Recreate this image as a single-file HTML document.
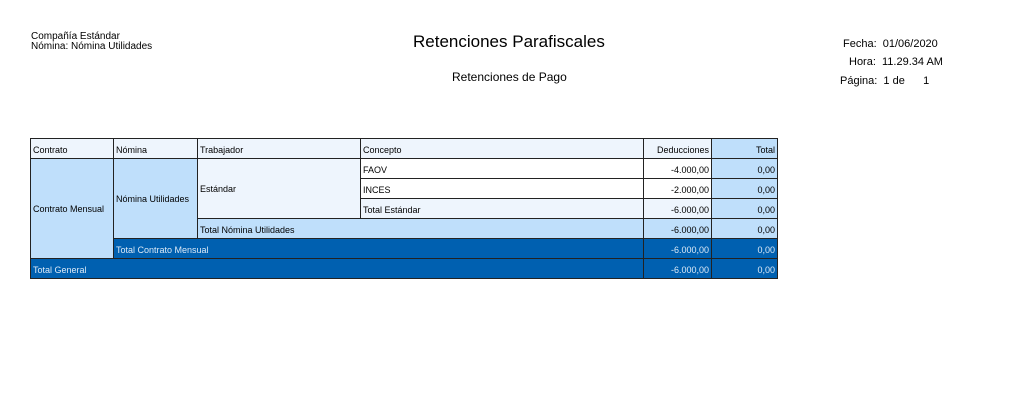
<!DOCTYPE html>
<html><head><meta charset="utf-8"><style>
body{margin:0;width:1011px;height:406px;background:#fff;font-family:"Liberation Sans",sans-serif;color:#000;position:relative;overflow:hidden}
.t{position:absolute;white-space:nowrap}
.c{position:absolute;box-sizing:border-box;border:1px solid #222;font-size:9px;line-height:18px;padding:2px 2px 0;white-space:nowrap;overflow:hidden}
.r{text-align:right}
.h{background:#eef5fd}
.l{background:#bfdffb}
.d{background:#0060b0;color:#dbe9f7}
.w{background:#fff}
</style></head><body>
<div class="t" style="left:31px;top:32px;font-size:10px;line-height:10px">Compañía Estándar<br>Nómina: Nómina Utilidades</div>
<div class="t" style="left:413px;top:32px;font-size:17px">Retenciones Parafiscales</div>
<div class="t" style="left:452px;top:70px;font-size:12px">Retenciones de Pago</div>
<div class="t" style="left:843px;top:38px;font-size:11px">Fecha:&nbsp; 01/06/2020</div>
<div class="t" style="left:849px;top:56px;font-size:11px">Hora:&nbsp; 11.29.34 AM</div>
<div class="t" style="left:840px;top:75px;font-size:11px">Página:&nbsp; 1 de &nbsp;&nbsp;&nbsp;&nbsp; 1</div>

<div class="c h" style="left:30px;top:138px;width:84px;height:21px">Contrato</div>
<div class="c h" style="left:113px;top:138px;width:85px;height:21px">Nómina</div>
<div class="c h" style="left:197px;top:138px;width:164px;height:21px">Trabajador</div>
<div class="c h" style="left:360px;top:138px;width:284px;height:21px">Concepto</div>
<div class="c h r" style="left:643px;top:138px;width:69px;height:21px">Deducciones</div>
<div class="c l r" style="left:711px;top:138px;width:67px;height:21px">Total</div>

<div class="c l" style="left:30px;top:158px;width:84px;height:101px;line-height:97px">Contrato Mensual</div>
<div class="c l" style="left:113px;top:158px;width:85px;height:81px;line-height:77px">Nómina Utilidades</div>
<div class="c h" style="left:197px;top:158px;width:164px;height:61px;line-height:57px">Estándar</div>
<div class="c w" style="left:360px;top:158px;width:284px;height:21px">FAOV</div>
<div class="c w r" style="left:643px;top:158px;width:69px;height:21px">-4.000,00</div>
<div class="c l r" style="left:711px;top:158px;width:67px;height:21px">0,00</div>
<div class="c w" style="left:360px;top:178px;width:284px;height:21px">INCES</div>
<div class="c w r" style="left:643px;top:178px;width:69px;height:21px">-2.000,00</div>
<div class="c l r" style="left:711px;top:178px;width:67px;height:21px">0,00</div>
<div class="c h" style="left:360px;top:198px;width:284px;height:21px">Total Estándar</div>
<div class="c h r" style="left:643px;top:198px;width:69px;height:21px">-6.000,00</div>
<div class="c l r" style="left:711px;top:198px;width:67px;height:21px">0,00</div>
<div class="c l" style="left:197px;top:218px;width:447px;height:21px">Total Nómina Utilidades</div>
<div class="c l r" style="left:643px;top:218px;width:69px;height:21px">-6.000,00</div>
<div class="c l r" style="left:711px;top:218px;width:67px;height:21px">0,00</div>
<div class="c d" style="left:113px;top:238px;width:531px;height:21px">Total Contrato Mensual</div>
<div class="c d r" style="left:643px;top:238px;width:69px;height:21px">-6.000,00</div>
<div class="c d r" style="left:711px;top:238px;width:67px;height:21px">0,00</div>
<div class="c d" style="left:30px;top:258px;width:614px;height:21px">Total General</div>
<div class="c d r" style="left:643px;top:258px;width:69px;height:21px">-6.000,00</div>
<div class="c d r" style="left:711px;top:258px;width:67px;height:21px">0,00</div>
</body></html>
